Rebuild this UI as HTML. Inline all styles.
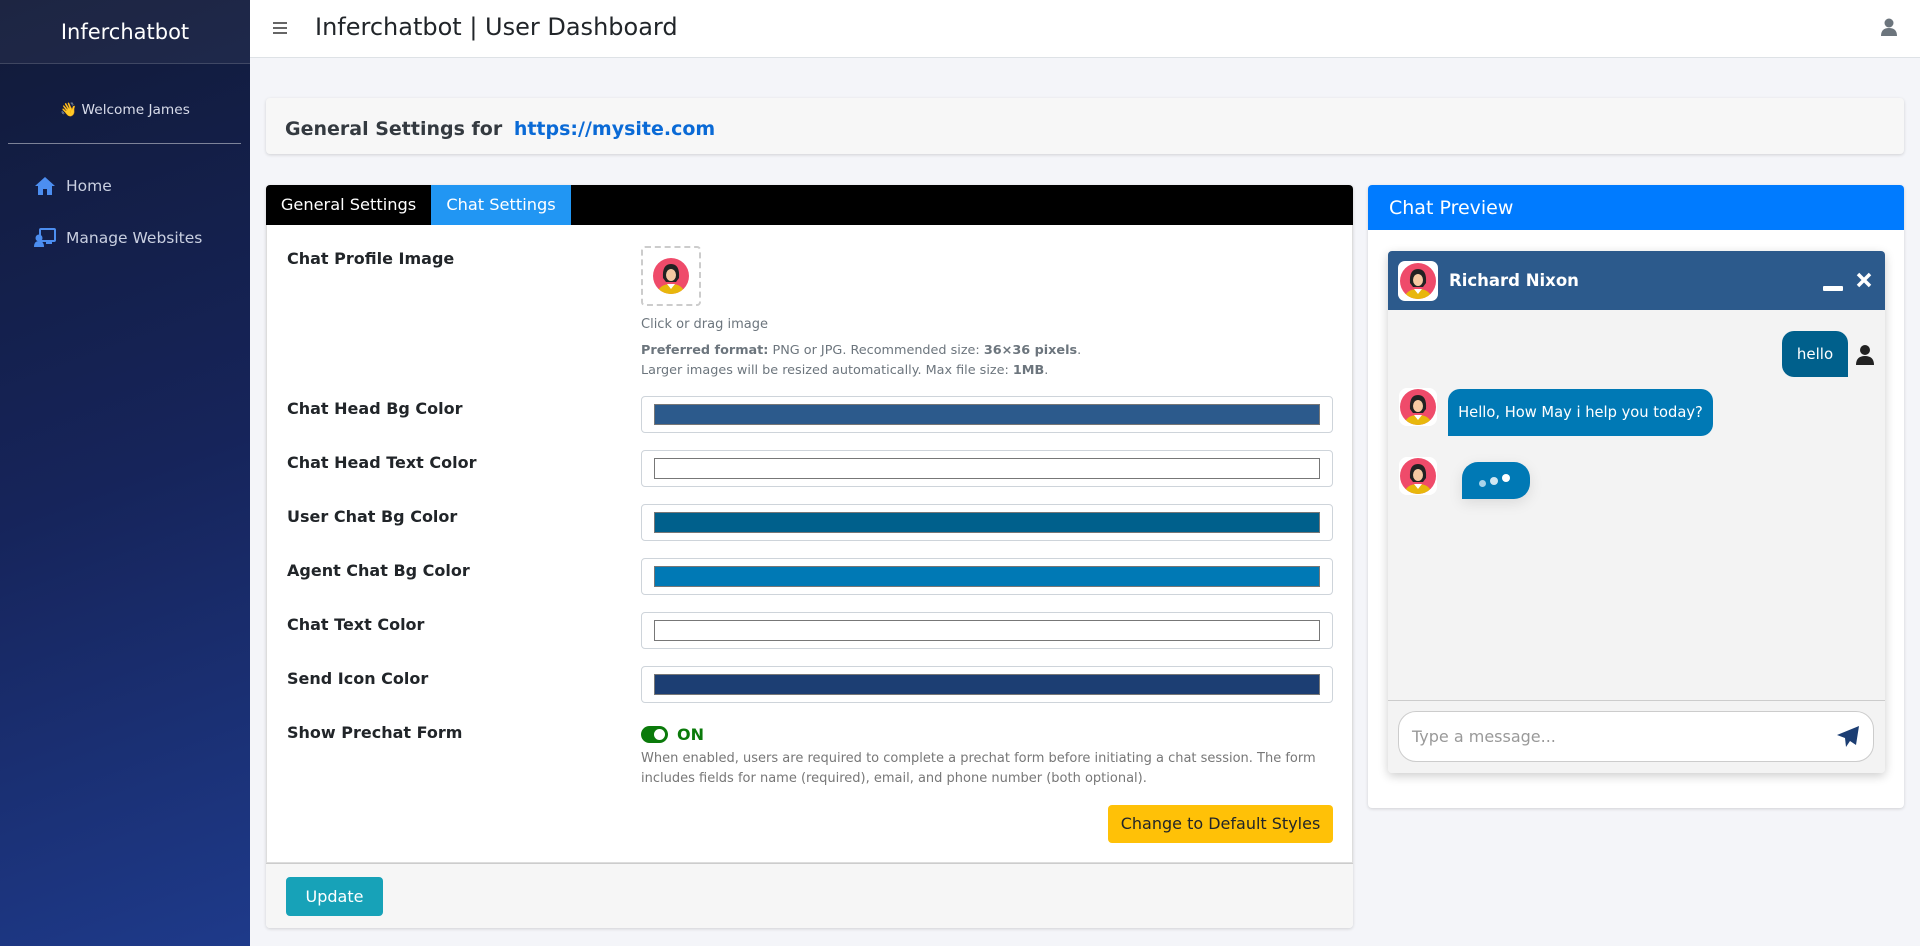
<!DOCTYPE html>
<html><head><meta charset="utf-8"><style>
*{box-sizing:border-box;margin:0;padding:0}
body{width:1920px;height:946px;overflow:hidden;background:#f4f5f9;font-family:"DejaVu Sans","Liberation Sans",sans-serif;color:#212529;position:relative}
.sb{position:absolute;left:0;top:0;width:250px;height:946px;background:linear-gradient(160deg,#111a38 0%,#16245a 50%,#1e3a8a 100%)}
.brand{height:64px;border-bottom:1px solid rgba(255,255,255,.15);background:rgba(255,255,255,.05);color:#fff;font-size:21px;text-align:center;line-height:64px}
.wel{position:absolute;top:102px;width:250px;text-align:center;color:#d8dcea;font-size:13.7px}
.hr{position:absolute;left:8px;width:233px;top:143px;border-top:1px solid rgba(255,255,255,.45)}
.nav{position:absolute;left:34px;color:#c9cfe0;font-size:15.5px;display:flex;align-items:center}
.nav svg{margin-right:10px}
.top{position:absolute;left:250px;top:0;right:0;height:58px;background:#fff;border-bottom:1px solid #dee2e6}
.top .t{position:absolute;left:65px;top:13px;font-size:24px;color:#212529}
.card{position:absolute;background:#fff;border-radius:4px;box-shadow:0 1px 3px rgba(0,0,0,.15)}
.lbl{position:absolute;left:20px;font-weight:bold;font-size:16px;color:#212529}
.ci{position:absolute;left:374px;width:692px;height:37px;border:1px solid #ced4da;border-radius:4px;background:#fff}
.ci div{position:absolute;left:12px;right:12px;top:7px;bottom:7px;border:1px solid #777}
.small{font-size:13px;color:#6c757d}
</style></head><body>
<div class="sb">
<div class="brand">Inferchatbot</div>
<div class="wel">👋 Welcome James</div>
<div class="hr"></div>
<div class="nav" style="top:176px"><svg width="22" height="20" viewBox="0 0 22 20"><path d="M11 1 L1 10 h3 v9 h5 v-6 h4 v6 h5 v-9 h3z" fill="#4c8ef0"/></svg>Home</div>
<div class="nav" style="top:228px"><svg width="22" height="20" viewBox="0 0 22 20"><rect x="6" y="1" width="15" height="12" rx="1" fill="none" stroke="#4c8ef0" stroke-width="2"/><circle cx="5" cy="10" r="3.5" fill="#4c8ef0"/><path d="M0 19 q0-6 5-6 q5 0 5 6z" fill="#4c8ef0"/><rect x="12" y="13" width="6" height="3" fill="#4c8ef0"/></svg>Manage Websites</div>
</div>
<div class="top">
<div style="position:absolute;left:23px;top:22px;width:14px"><div style="height:2px;background:#666;margin-bottom:3px"></div><div style="height:2px;background:#666;margin-bottom:3px"></div><div style="height:2px;background:#666"></div></div>
<div class="t">Inferchatbot | User Dashboard</div>
<svg style="position:absolute;left:1631px;top:18px" width="16" height="18" viewBox="0 0 16 18"><circle cx="8" cy="5" r="4.5" fill="#6c757d"/><path d="M0 18 q0-8 8-8 q8 0 8 8z" fill="#6c757d"/></svg>
</div>

<div class="card" style="left:266px;top:98px;width:1638px;height:56px;background:#f7f7f7">
<div style="position:absolute;left:19px;top:20px;font-size:19px;font-weight:bold;color:#343a40">General Settings for <span style="color:#0a6ad6;margin-left:5px">https://mysite.com</span></div>
</div>

<div class="card" style="left:266px;top:185px;width:1087px;height:743px;overflow:hidden">
<div style="height:40px;background:#000;position:relative">
<div style="position:absolute;left:0;top:0;width:165px;height:40px;color:#fff;font-size:16.2px;line-height:40px;text-align:center">General Settings</div>
<div style="position:absolute;left:165px;top:0;width:140px;height:40px;background:#2196f3;color:#fff;font-size:16.2px;line-height:40px;text-align:center">Chat Settings</div>
</div>
<div style="position:absolute;left:0;top:40px;width:1087px;height:638px;border:1px solid #ddd;border-top:none">
<div class="lbl" style="top:24px">Chat Profile Image</div>
<div style="position:absolute;left:374px;top:21px;width:60px;height:60px;border:2px dashed #ccc;border-radius:4px">
<svg style="position:absolute;left:10px;top:10px" width="36" height="36" viewBox="0 0 36 36"><defs><clipPath id="c0"><circle cx="18" cy="18" r="18"/></clipPath></defs><g clip-path="url(#c0)"><rect width="36" height="36" fill="#ef4b6a"/><path d="M4 36 q2-10 14-10 q12 0 14 10z" fill="#e8b70c"/><path d="M10 20 q-1-14 8-14 q9 0 8 14 l-3 4 h-10z" fill="#222"/><ellipse cx="18" cy="17" rx="5" ry="6" fill="#f6c9a2"/><path d="M14 26 l4 5 l4-5z" fill="#fff"/></g></svg>
</div>
<div class="small" style="position:absolute;left:374px;top:92px;font-size:13px">Click or drag image</div>
<div class="small" style="position:absolute;left:374px;top:116px;font-size:12.8px;line-height:20px">
<b>Preferred format:</b> PNG or JPG. Recommended size: <b>36×36 pixels</b>.<br>Larger images will be resized automatically. Max file size: <b>1MB</b>.</div>

<div class="lbl" style="top:174px">Chat Head Bg Color</div>
<div class="ci" style="top:171px"><div style="background:#2c5a8c"></div></div>
<div class="lbl" style="top:228px">Chat Head Text Color</div>
<div class="ci" style="top:225px"><div style="background:#fff"></div></div>
<div class="lbl" style="top:282px">User Chat Bg Color</div>
<div class="ci" style="top:279px"><div style="background:#00608c"></div></div>
<div class="lbl" style="top:336px">Agent Chat Bg Color</div>
<div class="ci" style="top:333px"><div style="background:#0079b5"></div></div>
<div class="lbl" style="top:390px">Chat Text Color</div>
<div class="ci" style="top:387px"><div style="background:#fff"></div></div>
<div class="lbl" style="top:444px">Send Icon Color</div>
<div class="ci" style="top:441px"><div style="background:#1c3e73"></div></div>

<div class="lbl" style="top:498px">Show Prechat Form</div>
<div style="position:absolute;left:374px;top:501px;width:27px;height:17px;border-radius:9px;background:#0b7a0b"><div style="position:absolute;right:3px;top:3px;width:11px;height:11px;border-radius:50%;background:#fff"></div></div>
<div style="position:absolute;left:410px;top:500px;color:#0b7a0b;font-weight:bold;font-size:16px">ON</div>
<div class="small" style="position:absolute;left:374px;top:524px;width:700px;font-size:13px;line-height:20px;color:#777">When enabled, users are required to complete a prechat form before initiating a chat session. The form includes fields for name (required), email, and phone number (both optional).</div>
<div style="position:absolute;left:841px;top:580px;width:225px;height:38px;background:#ffc107;border-radius:4px;font-size:16px;line-height:38px;text-align:center;color:#212529">Change to Default Styles</div>
</div>
<div style="position:absolute;left:0;top:678px;width:1087px;height:65px;background:#f6f6f6;border-top:1px solid #ccc">
<div style="position:absolute;left:20px;top:13px;width:97px;height:39px;background:#17a2b8;border-radius:4px;color:#fff;font-size:16px;line-height:39px;text-align:center">Update</div>
</div>
</div>

<div class="card" style="left:1368px;top:185px;width:536px;height:623px">
<div style="height:45px;background:#007bff;border-radius:4px 4px 0 0;color:#fff;font-size:19px;line-height:47px;padding-left:21px">Chat Preview</div>
<div style="position:absolute;left:20px;top:66px;width:497px;height:522px;background:#f3f3f3;border-radius:4px;box-shadow:0 3px 10px rgba(0,0,0,.2);overflow:hidden">
<div style="height:59px;background:#2c5a8c;position:relative">
<div style="position:absolute;left:10px;top:10px;width:40px;height:40px;background:#fff;border-radius:7px;padding:2px"><svg width="36" height="36" viewBox="0 0 36 36"><g clip-path="url(#c0)"><rect width="36" height="36" fill="#ef4b6a"/><path d="M4 36 q2-10 14-10 q12 0 14 10z" fill="#e8b70c"/><path d="M10 20 q-1-14 8-14 q9 0 8 14 l-3 4 h-10z" fill="#222"/><ellipse cx="18" cy="17" rx="5" ry="6" fill="#f6c9a2"/><path d="M14 26 l4 5 l4-5z" fill="#fff"/></g></svg></div>
<div style="position:absolute;left:61px;top:20px;color:#fff;font-weight:bold;font-size:16.5px">Richard Nixon</div>
<div style="position:absolute;left:435px;top:35px;width:20px;height:5px;background:#fff;border-radius:1px"></div>
<svg style="position:absolute;left:468px;top:21px" width="16" height="16" viewBox="0 0 16 16"><path d="M2 2 L14 14 M14 2 L2 14" stroke="#fff" stroke-width="3.5"/></svg>
</div>
<div style="position:absolute;left:394px;top:80px;width:66px;height:46px;background:#00608c;border-radius:12px 12px 0 12px;color:#fff;font-size:15px;line-height:46px;text-align:center">hello</div>
<svg style="position:absolute;left:468px;top:94px" width="18" height="20" viewBox="0 0 18 20"><circle cx="9" cy="5" r="5" fill="#222"/><path d="M0 20 q0-9 9-9 q9 0 9 9z" fill="#222"/></svg>
<div style="position:absolute;left:11px;top:137px;width:38px;height:38px;background:#fff;border-radius:8px;padding:1px"><svg width="36" height="36" viewBox="0 0 36 36"><g clip-path="url(#c0)"><rect width="36" height="36" fill="#ef4b6a"/><path d="M4 36 q2-10 14-10 q12 0 14 10z" fill="#e8b70c"/><path d="M10 20 q-1-14 8-14 q9 0 8 14 l-3 4 h-10z" fill="#222"/><ellipse cx="18" cy="17" rx="5" ry="6" fill="#f6c9a2"/><path d="M14 26 l4 5 l4-5z" fill="#fff"/></g></svg></div>
<div style="position:absolute;left:60px;top:138px;width:265px;height:47px;background:#0079b5;border-radius:12px 12px 12px 0;color:#fff;font-size:14.7px;line-height:47px;text-align:center">Hello, How May i help you today?</div>
<div style="position:absolute;left:11px;top:206px;width:38px;height:38px;background:#fff;border-radius:8px;padding:1px"><svg width="36" height="36" viewBox="0 0 36 36"><g clip-path="url(#c0)"><rect width="36" height="36" fill="#ef4b6a"/><path d="M4 36 q2-10 14-10 q12 0 14 10z" fill="#e8b70c"/><path d="M10 20 q-1-14 8-14 q9 0 8 14 l-3 4 h-10z" fill="#222"/><ellipse cx="18" cy="17" rx="5" ry="6" fill="#f6c9a2"/><path d="M14 26 l4 5 l4-5z" fill="#fff"/></g></svg></div>
<div style="position:absolute;left:74px;top:211px;width:68px;height:37px;background:#0079b5;border-radius:16px 16px 16px 0;box-shadow:0 4px 14px rgba(0,0,0,.1)">
<span style="position:absolute;left:17px;top:18px;width:7px;height:7px;border-radius:50%;background:#a8d4ea"></span>
<span style="position:absolute;left:28px;top:15px;width:8px;height:8px;border-radius:50%;background:#cfe6f2"></span>
<span style="position:absolute;left:40px;top:12px;width:8px;height:8px;border-radius:50%;background:#fff"></span>
</div>
<div style="position:absolute;left:0;top:449px;width:497px;height:73px;border-top:1px solid #ccc;background:#f3f3f3">
<div style="position:absolute;left:10px;top:10px;width:476px;height:51px;background:#fff;border:1px solid #ccc;border-radius:18px;color:#999;font-size:16px;line-height:49px;padding-left:13px">Type a message...
<svg style="position:absolute;right:13px;top:13px" width="24" height="24" viewBox="0 0 24 24"><path d="M23 1 L1 10 l8 3 z M23 1 L9 13 l1 9 z M23 1 L10 22 l4-6 z M23 1 L14 16 l6 4z" fill="#1c3e73"/></svg></div>
</div>
</div>
</div>
</body></html>
